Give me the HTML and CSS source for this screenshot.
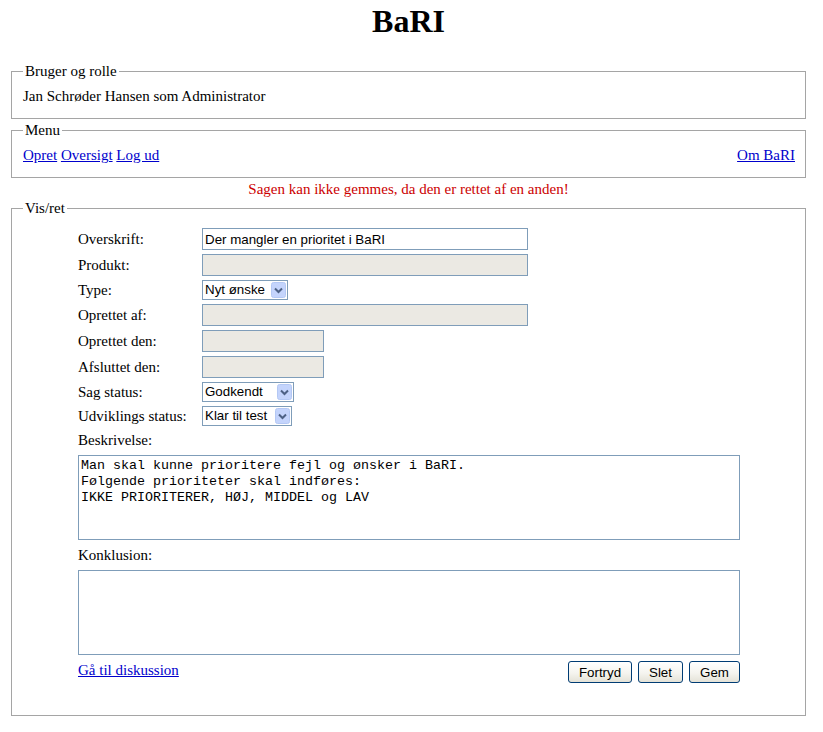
FILE: index.html
```html
<!DOCTYPE html>
<html lang="da">
<head>
<meta charset="utf-8">
<title>BaRI</title>
<link rel="stylesheet" href="styles.css">
</head>
<body>
<h1 class="title">BaRI</h1>

<fieldset class="box box-user">
  <legend class="box-legend">Bruger og rolle</legend>
  <div class="box-line">Jan Schrøder Hansen som Administrator</div>
</fieldset>

<fieldset class="box box-menu">
  <legend class="box-legend">Menu</legend>
  <div class="box-line menu-line">
    <div class="menu-left"><a href="#" class="link">Opret</a> <a href="#" class="link">Oversigt</a> <a href="#" class="link">Log ud</a></div>
    <a href="#" class="link">Om BaRI</a>
  </div>
</fieldset>

<div class="alert">Sagen kan ikke gemmes, da den er rettet af en anden!</div>

<fieldset class="box box-edit">
  <legend class="box-legend">Vis/ret</legend>
  <form class="form">
    <div class="row row-field"><label class="lbl">Overskrift:</label><input class="field field-wide" type="text" value="Der mangler en prioritet i BaRI"></div>
    <div class="row row-field"><label class="lbl">Produkt:</label><input class="field field-wide" type="text" disabled></div>
    <div class="row row-select"><label class="lbl">Type:</label>
      <span class="select select-type"><select class="select-native"><option>Nyt ønske</option></select><svg class="select-btn" viewBox="0 0 15 16"><rect x="0.5" y="0.5" width="14" height="15" rx="2" fill="#c4d4fc" stroke="#b4c8f4"/><path d="M4 6.5l3.5 3.5L11 6.5" fill="none" stroke="#4d6185" stroke-width="2"/></svg></span>
    </div>
    <div class="row row-field"><label class="lbl">Oprettet af:</label><input class="field field-wide" type="text" disabled></div>
    <div class="row row-field"><label class="lbl">Oprettet den:</label><input class="field field-short" type="text" disabled></div>
    <div class="row row-field"><label class="lbl">Afsluttet den:</label><input class="field field-short" type="text" disabled></div>
    <div class="row row-select"><label class="lbl">Sag status:</label>
      <span class="select select-sag"><select class="select-native"><option>Godkendt</option></select><svg class="select-btn" viewBox="0 0 15 16"><rect x="0.5" y="0.5" width="14" height="15" rx="2" fill="#c4d4fc" stroke="#b4c8f4"/><path d="M4 6.5l3.5 3.5L11 6.5" fill="none" stroke="#4d6185" stroke-width="2"/></svg></span>
    </div>
    <div class="row row-select"><label class="lbl">Udviklings status:</label>
      <span class="select select-udv"><select class="select-native"><option>Klar til test</option></select><svg class="select-btn" viewBox="0 0 15 16"><rect x="0.5" y="0.5" width="14" height="15" rx="2" fill="#c4d4fc" stroke="#b4c8f4"/><path d="M4 6.5l3.5 3.5L11 6.5" fill="none" stroke="#4d6185" stroke-width="2"/></svg></span>
    </div>
    <div class="row row-label"><label class="lbl">Beskrivelse:</label></div>
    <textarea class="area">Man skal kunne prioritere fejl og ønsker i BaRI.
Følgende prioriteter skal indføres:
IKKE PRIORITERER, HØJ, MIDDEL og LAV</textarea>
    <div class="row row-label row-label-gap"><label class="lbl">Konklusion:</label></div>
    <textarea class="area"></textarea>
    <div class="actions">
      <a href="#" class="link">Gå til diskussion</a>
      <div class="buttons">
        <button type="button" class="btn btn-fortryd">Fortryd</button>
        <button type="button" class="btn btn-slet">Slet</button>
        <button type="button" class="btn btn-gem">Gem</button>
      </div>
    </div>
  </form>
</fieldset>
</body>
</html>
```

FILE: styles.css
```css
* {
  box-sizing: border-box;
}

body {
  margin: 3px 8px 8px;
  font-family: "Liberation Serif", "Times New Roman", serif;
  font-size: 15px;
  line-height: 18px;
  color: #000;
  background: #fff;
}

.title {
  margin: 0 9px 23px 3px;
  font-size: 32px;
  line-height: 36px;
  font-weight: bold;
  text-align: center;
}

.box {
  margin: 0 9px 0 3px;
  padding: 7px 10px 13px 11px;
  border: 1px solid #a5a5a5;
  min-width: 0;
}

.box-legend {
  padding: 0 2px;
  line-height: 18px;
}

.box-menu {
  margin-top: 2px;
}

.menu-line {
  display: flex;
  justify-content: space-between;
}

.link {
  color: #0000cc;
  text-decoration: underline;
}

.alert {
  margin: 2px 9px 1px 3px;
  text-align: center;
  color: #cc0000;
}

.box-edit {
  padding: 9px 10px 32px 11px;
}

.form {
  width: 662px;
  margin: 0 auto;
}

.row {
  display: flex;
  align-items: center;
}

.row-field {
  height: 26px;
}

.row-select {
  height: 24px;
}

.row-label {
  height: 23px;
}

.row-label-gap {
  margin-top: 3px;
}

.lbl {
  width: 124px;
  flex: none;
}

.field {
  height: 22px;
  margin: 0;
  padding: 0 2px;
  border: 1px solid #7f9db9;
  background: #fff;
  color: #000;
  font: 13.33px "Liberation Sans", Arial, sans-serif;
  outline: none;
}

.field:disabled {
  background: #ebe9e3;
}

.field-wide {
  width: 326px;
}

.field-short {
  width: 122px;
}

.select {
  display: inline-flex;
  align-items: center;
  height: 20px;
  padding: 1px;
  border: 1px solid #7f9db9;
  background: #fff;
}

.select-native {
  -webkit-appearance: none;
  appearance: none;
  flex: 1;
  min-width: 0;
  height: 16px;
  margin: 0;
  padding: 0 0 0 1px;
  border: 0;
  background: transparent;
  color: #000;
  font: 13.33px "Liberation Sans", Arial, sans-serif;
  line-height: 16px;
  outline: none;
}

.select-btn {
  display: block;
  flex: none;
  width: 15px;
  height: 16px;
}

.select-type {
  width: 86px;
}

.select-sag {
  width: 92px;
}

.select-udv {
  width: 90px;
}

.area {
  display: block;
  width: 662px;
  height: 85px;
  margin: 4px 0 0;
  padding: 2px;
  border: 1px solid #7f9db9;
  background: #fff;
  color: #000;
  font: 13.33px/16px "Liberation Mono", "Courier New", monospace;
  resize: none;
  outline: none;
}

.actions {
  display: flex;
  justify-content: space-between;
  align-items: flex-start;
  margin-top: 6px;
}

.buttons {
  display: flex;
  gap: 6px;
}

.btn {
  height: 22px;
  margin: 0;
  padding: 0;
  border: 1px solid #003c74;
  border-radius: 3px;
  background: linear-gradient(#ffffff, #f5f4ef 55%, #e4e2d7);
  color: #000;
  font: 13.33px "Liberation Sans", Arial, sans-serif;
}

.btn-fortryd {
  width: 64px;
}

.btn-slet {
  width: 45px;
}

.btn-gem {
  width: 51px;
}
```
